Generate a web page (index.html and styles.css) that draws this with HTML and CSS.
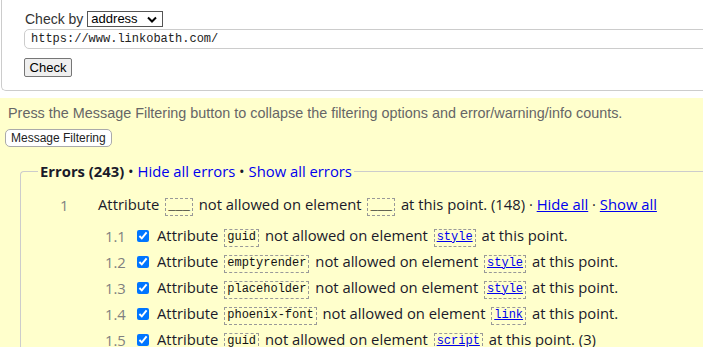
FILE: index.html
```html
<!DOCTYPE html>
<html lang="en">
<head>
    <meta charset="UTF-8">
    <title>Nu Html Checker</title>
    <link rel="stylesheet" href="styles.css">
</head>
<body>
    <!-- Check form -->
    <div class="check-box">
        <div class="check-by">
            <label for="doc-type">Check by</label>
            <select id="doc-type" class="by-select">
                <option>address</option>
                <option>file upload</option>
                <option>text input</option>
            </select>
        </div>
        <input class="url-input" type="text" value="https://www.linkobath.com/">
        <button class="check-btn">Check</button>
    </div>

    <!-- Results -->
    <div class="results">
        <p class="hint">Press the Message Filtering button to collapse the filtering options and error/warning/info counts.</p>
        <button class="filter-btn">Message Filtering</button>

        <fieldset class="errors">
            <legend><b>Errors (243)</b> &bull; <a href="#">Hide all errors</a> &bull; <a href="#">Show all errors</a></legend>

            <div class="group">
                <div class="line">
                    <span class="num">1</span>
                    <span class="text">Attribute <code>___</code> not allowed on element <code>___</code> at this point. (148) &middot; <a class="ul" href="#">Hide all</a> &middot; <a class="ul" href="#">Show all</a></span>
                </div>
                <div class="sub">
                    <div class="line">
                        <span class="num">1.1</span>
                        <input type="checkbox" checked>
                        <span class="text">Attribute <code>guid</code> not allowed on element <code><a href="#">style</a></code> at this point.</span>
                    </div>
                    <div class="line">
                        <span class="num">1.2</span>
                        <input type="checkbox" checked>
                        <span class="text">Attribute <code>emptyrender</code> not allowed on element <code><a href="#">style</a></code> at this point.</span>
                    </div>
                    <div class="line">
                        <span class="num">1.3</span>
                        <input type="checkbox" checked>
                        <span class="text">Attribute <code>placeholder</code> not allowed on element <code><a href="#">style</a></code> at this point.</span>
                    </div>
                    <div class="line">
                        <span class="num">1.4</span>
                        <input type="checkbox" checked>
                        <span class="text">Attribute <code>phoenix-font</code> not allowed on element <code><a href="#">link</a></code> at this point.</span>
                    </div>
                    <div class="line">
                        <span class="num">1.5</span>
                        <input type="checkbox" checked>
                        <span class="text">Attribute <code>guid</code> not allowed on element <code><a href="#">script</a></code> at this point. (3)</span>
                    </div>
                </div>
            </div>
        </fieldset>
    </div>
</body>
</html>
```

FILE: styles.css
```css
html, body {
    overflow: hidden;
}
body {
    margin: 0;
    font-family: "Liberation Sans", Arial, sans-serif;
    font-size: 14px;
    color: #333;
    background-color: #fff;
}

/* Check form */
.check-box {
    margin-left: 1px;
    height: 91px;
    padding: 11px 0 0 22px;
    box-sizing: border-box;
    border-left: 1px solid #ccc;
    border-bottom: 1px solid #ccc;
    border-bottom-left-radius: 5px;
}
.check-by {
    display: flex;
    align-items: center;
    height: 16px;
}
.check-by label {
    margin: 0 4px 0 1px;
    font-size: 14px;
}
.by-select {
    appearance: none;
    width: 76px;
    height: 16px;
    padding: 0 0 0 3px;
    border: 1px solid #555;
    border-radius: 0;
    background: #fff url("data:image/svg+xml;utf8,<svg xmlns='http://www.w3.org/2000/svg' width='10' height='7' viewBox='0 0 10 7'><path d='M1 1.5l4 4 4-4' fill='none' stroke='black' stroke-width='2'/></svg>") no-repeat right 5px center;
    font-family: "Liberation Sans", Arial, sans-serif;
    font-size: 13px;
    line-height: 14px;
    color: #000;
}
.url-input {
    display: block;
    width: 720px;
    height: 20px;
    margin: 2px 0 0 0;
    padding: 0 6px;
    box-sizing: border-box;
    border: 1px solid #ccc;
    border-radius: 5px;
    font-family: "Liberation Mono", "DejaVu Sans Mono", monospace;
    font-size: 12px;
    color: #222;
}
.check-btn {
    display: block;
    margin-top: 9px;
    width: 48px;
    height: 19px;
    padding: 0;
    border: 1px solid #767676;
    border-radius: 2px;
    background-color: #efefef;
    font-family: "Liberation Sans", Arial, sans-serif;
    font-size: 13px;
    color: #000;
}

/* Results */
.results {
    margin-top: 7px;
    padding-top: 6px;
    height: 260px;
    background-color: #ffc;
}
.hint {
    margin: 0 0 7px 8px;
    line-height: 18px;
    font-size: 14.4px;
    color: #666;
    white-space: nowrap;
}
.filter-btn {
    display: block;
    margin-left: 5px;
    height: 18px;
    padding: 0 5px;
    border: 1px solid #aaa;
    border-radius: 5px;
    background-color: #fff;
    font-family: "Liberation Sans", Arial, sans-serif;
    font-size: 12px;
    color: #222;
}
.errors {
    margin: 14px -40px 0 20px;
    padding: 0;
    border: none;
    border-top: 1px solid #ccc;
    border-left: 1px solid #ccc;
    border-top-left-radius: 4px;
    font-family: "Open Sans", sans-serif;
    font-size: 14.8px;
    color: #1a1a2a;
}
.errors legend {
    margin-left: 17px;
    padding: 0 2px;
    line-height: 20px;
    font-size: 14.8px;
}
a {
    color: #00e;
    text-decoration: none;
}
a.ul, code a {
    text-decoration: underline;
}
.group {
    margin-top: 11px;
}
.line {
    display: flex;
    align-items: center;
    height: 26px;
    white-space: nowrap;
}
.num {
    color: #808080;
}
.group > .line {
    padding-left: 39px;
}
.group > .line .num {
    width: 38px;
}
.sub {
    margin-top: 5px;
}
.sub .line {
    padding-left: 84px;
}
.sub .line .num {
    width: 32px;
}
.sub input[type="checkbox"] {
    width: 12px;
    height: 12px;
    margin: 0 8px 0 0;
}
code {
    display: inline-block;
    margin: 0 2px;
    padding: 1px 2px 2px;
    border: 1px dashed #999;
    vertical-align: middle;
    font-family: "Liberation Mono", monospace;
    font-size: 12px;
    line-height: 13px;
    color: #111;
}
```
